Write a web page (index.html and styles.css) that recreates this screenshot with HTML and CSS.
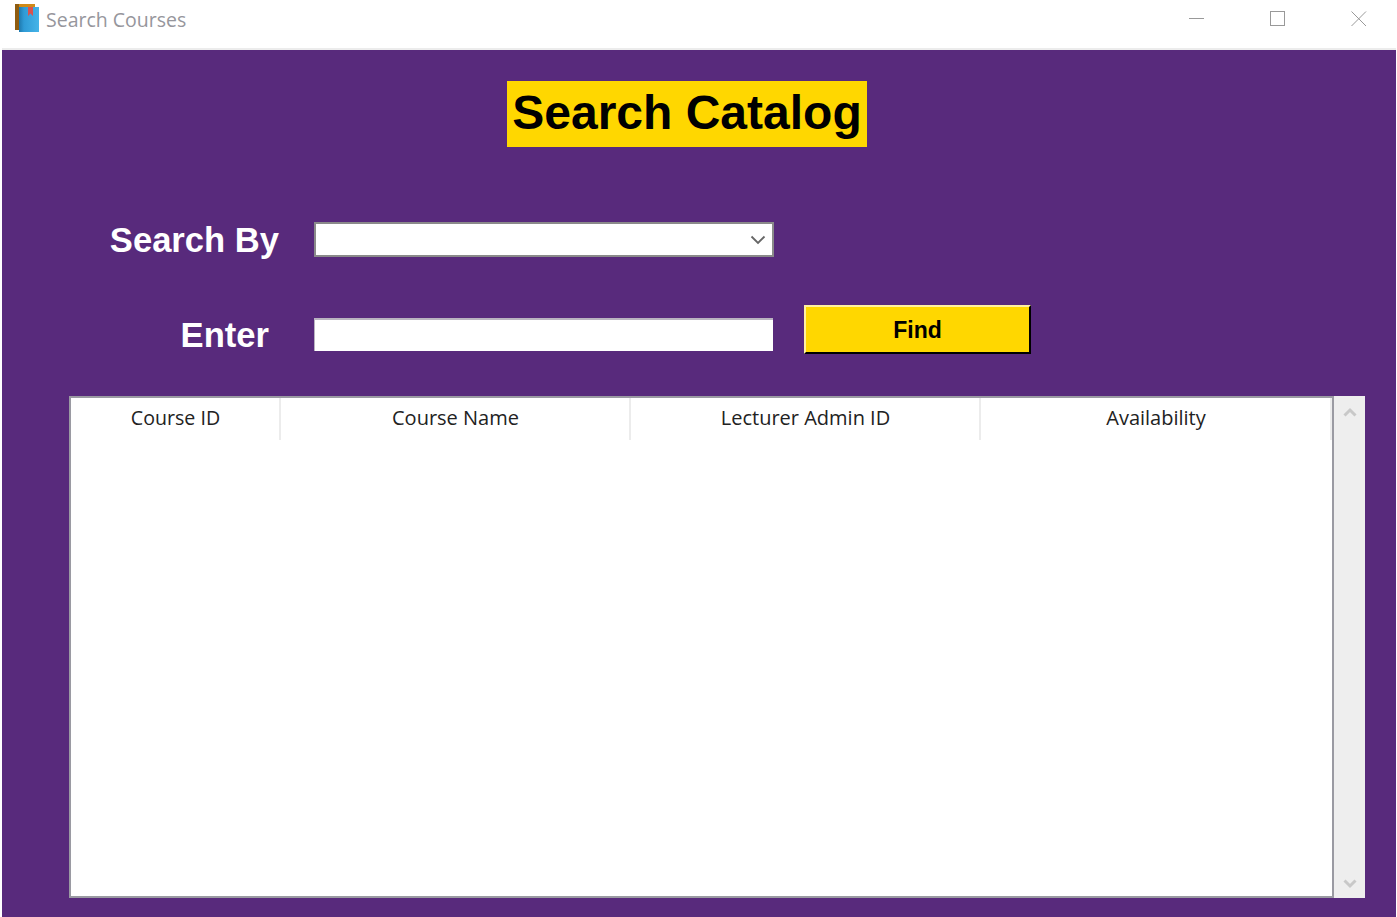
FILE: index.html
```html
<!DOCTYPE html>
<html>
<head>
  <meta charset="utf-8">
  <title>Search Courses</title>
  <link rel="stylesheet" href="styles.css">
</head>
<body>
  <header class="titlebar">
    <svg class="app-icon" width="26" height="28" viewBox="0 0 26 28">
      <defs>
        <linearGradient id="cover" x1="0" x2="1" y1="0" y2="0">
          <stop offset="0" stop-color="#1f78ad"/>
          <stop offset="0.25" stop-color="#2f9bd6"/>
          <stop offset="1" stop-color="#45b4e8"/>
        </linearGradient>
      </defs>
      <rect x="1" y="0" width="20" height="26" fill="#d08a18"/>
      <rect x="1" y="0" width="4" height="26" fill="#8f5c10"/>
      <rect x="5" y="3" width="20" height="25" fill="url(#cover)"/>
      <path d="M14 3h5v9l-2.500-2.500-2.500 2.500z" fill="#d9534f"/>
    </svg>
    <span class="window-title">Search Courses</span>
    <div class="window-controls">
      <svg width="16" height="16" viewBox="0 0 16 16"><path d="M0 7.500h15" stroke="#999" fill="none"/></svg>
      <svg width="16" height="16" viewBox="0 0 16 16"><rect x="0.500" y="0.500" width="14" height="14" stroke="#999" fill="none"/></svg>
      <svg width="16" height="16" viewBox="0 0 16 16"><path d="M0.500 0.500l14.500 14.500M15 0.500L0.500 15" stroke="#999" fill="none"/></svg>
    </div>
  </header>

  <main class="content">
    <h1 class="heading">Search Catalog</h1>

    <div class="search-form">
      <label class="field-label" for="searchBy">Search By</label>
      <div class="combo">
        <select id="searchBy" class="combo-select"></select>
        <svg class="combo-arrow" width="16" height="10" viewBox="0 0 16 10"><path d="M1.500 1.500L8 8l6.500-6.500" stroke="#666" stroke-width="1.800" fill="none"/></svg>
      </div>
      <span></span>

      <label class="field-label field-label-enter" for="enter">Enter</label>
      <input id="enter" class="text-input" type="text">
      <button class="find-btn">Find</button>
    </div>

    <div class="results">
      <div class="table-wrap">
        <table class="course-table">
          <thead>
            <tr>
              <th class="col-id">Course ID</th>
              <th>Course Name</th>
              <th>Lecturer Admin ID</th>
              <th class="col-last">Availability</th>
            </tr>
          </thead>
        </table>
      </div>
      <div class="scrollbar">
        <svg width="14" height="10" viewBox="0 0 14 10"><path d="M1.500 8.500L7 3l5.500 5.500" stroke="#c8c8c8" stroke-width="3" fill="none"/></svg>
        <svg width="14" height="10" viewBox="0 0 14 10"><path d="M1.500 1.500L7 7l5.500-5.500" stroke="#c8c8c8" stroke-width="3" fill="none"/></svg>
      </div>
    </div>
  </main>
</body>
</html>
```

FILE: styles.css
```css
html, body {
  margin: 0;
  height: 100%;
}
body {
  display: flex;
  flex-direction: column;
  height: 917px;
  overflow: hidden;
  background-color: #fff;
  font-family: "Liberation Sans", Arial, sans-serif;
}
.titlebar {
  display: flex;
  align-items: center;
  height: 48px;
  padding-left: 14px;
  box-sizing: border-box;
  flex-shrink: 0;
}
.app-icon {
  margin-top: -12px;
}
.window-title {
  margin-left: 6px;
  margin-top: -10px;
  font-family: "Open Sans", sans-serif;
  font-size: 19.500px;
  color: #96969c;
}
.window-controls {
  display: flex;
  gap: 65px;
  margin-left: auto;
  margin-right: 30px;
  margin-top: -11px;
}
.content {
  flex: 1;
  margin: 0 1px 0 2px;
  padding-top: 31px;
  border-top: 2px solid #ececec;
  background-color: #582a7c;
  background-clip: padding-box;
}
.heading {
  width: 360px;
  height: 66px;
  margin: 0 0 75px 505px;
  background-color: #ffd700;
  color: #000;
  font-size: 48px;
  line-height: 64px;
  font-weight: bold;
  text-align: center;
}
.search-form {
  display: grid;
  grid-template-columns: 209px 460px 1fr;
  grid-template-rows: 35px 49px;
  column-gap: 35px;
  row-gap: 48px;
  margin-left: 68px;
  align-items: center;
}
.field-label {
  margin-top: 2px;
  color: #fff;
  font-size: 34.600px;
  font-weight: bold;
  text-align: right;
  white-space: nowrap;
}
.field-label-enter {
  margin-top: 12px;
  padding-right: 10px;
}
.combo {
  position: relative;
  height: 35px;
}
.combo-select {
  display: block;
  width: 100%;
  height: 100%;
  box-sizing: border-box;
  appearance: none;
  border: 2px solid #8a8a8a;
  border-radius: 0;
  background-color: #fff;
}
.combo-arrow {
  position: absolute;
  top: 13px;
  right: 8px;
}
.text-input {
  width: 459px;
  height: 33px;
  margin-top: 9px;
  box-sizing: border-box;
  border: 0;
  border-top: 2px solid #b9b3c0;
  border-left: 1px solid #b9b3c0;
  border-radius: 0;
  background-color: #fff;
}
.find-btn {
  width: 227px;
  height: 49px;
  margin-left: -5px;
  box-sizing: border-box;
  border: 2px solid;
  border-color: #fff0a0 #000 #000 #fff0a0;
  background-color: #ffd700;
  color: #000;
  font-family: "Liberation Sans", Arial, sans-serif;
  font-size: 23px;
  font-weight: bold;
  padding: 2px 0 0;
}
.results {
  display: flex;
  width: 1296px;
  height: 502px;
  margin: 42px 0 0 67px;
}
.table-wrap {
  flex: 1;
  min-width: 0;
  box-sizing: border-box;
  background-color: #fff;
  border: 2px solid #9a9aa2;
}
.course-table {
  table-layout: fixed;
  border-collapse: separate;
  border-spacing: 0;
  width: 1261px;
}
.course-table th {
  width: 350px;
  height: 42px;
  box-sizing: border-box;
  padding: 0 0 4px 1px;
  border-right: 2px solid #ececec;
  font-family: "Open Sans", sans-serif;
  font-size: 20px;
  font-weight: normal;
  color: #222;
  text-align: center;
}
.course-table th.col-id {
  width: 210px;
  font-size: 19.600px;
}
.course-table th.col-last {
  width: 351px;
}
.scrollbar {
  display: flex;
  flex-direction: column;
  justify-content: space-between;
  align-items: center;
  width: 31px;
  flex-shrink: 0;
  padding: 11px 0 9px;
  box-sizing: border-box;
  background-color: #eeeeee;
}
```
